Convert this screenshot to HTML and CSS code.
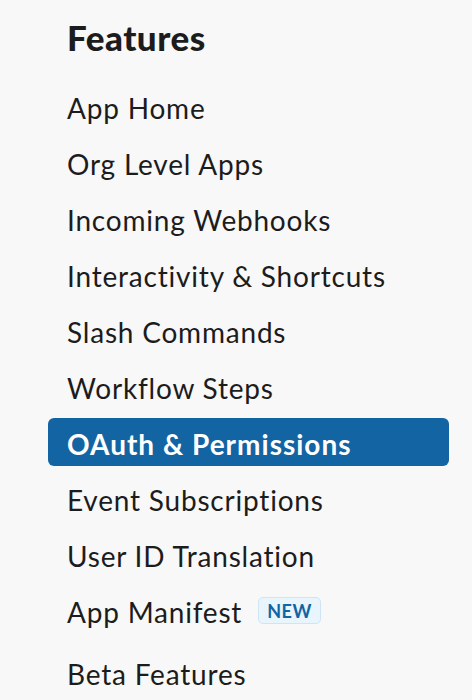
FILE: index.html
```html
<!DOCTYPE html>
<html lang="en">
<head>
<meta charset="utf-8">
<title>Features</title>
<link rel="stylesheet" href="styles.css">
</head>
<body>
<nav class="sidebar">
  <h2 class="sidebar-title">Features</h2>
  <ul class="nav-list">
    <li><a class="nav-item" href="#">App Home</a></li>
    <li><a class="nav-item" href="#">Org Level Apps</a></li>
    <li><a class="nav-item" href="#">Incoming Webhooks</a></li>
    <li><a class="nav-item" href="#">Interactivity &amp; Shortcuts</a></li>
    <li><a class="nav-item" href="#">Slash Commands</a></li>
    <li><a class="nav-item" href="#">Workflow Steps</a></li>
    <li><a class="nav-item is-active" href="#">OAuth &amp; Permissions</a></li>
    <li><a class="nav-item" href="#">Event Subscriptions</a></li>
    <li><a class="nav-item" href="#">User ID Translation</a></li>
    <li><a class="nav-item" href="#">App Manifest <span class="badge">NEW</span></a></li>
    <li class="nav-group-end"><a class="nav-item" href="#">Beta Features</a></li>
  </ul>
</nav>
</body>
</html>
```
FILE: styles.css
```css
html, body {
  margin: 0;
  padding: 0;
  background: #f8f8f8;
}

body {
  font-family: Lato, "Liberation Sans", sans-serif;
  color: #1d1c1d;
}

.sidebar {
  width: 401px;
  margin-left: 48px;
  padding-top: 17px;
}

.sidebar-title {
  margin: 0 0 25px 19px;
  font-size: 35px;
  line-height: 40px;
  font-weight: 900;
  letter-spacing: 0.5px;
  color: #1d1c1d;
}

.nav-list {
  list-style: none;
  margin: 0;
  padding: 0;
  display: flex;
  flex-direction: column;
  gap: 8px;
}

.nav-group-end {
  margin-top: 6px;
}

.nav-item {
  display: flex;
  align-items: center;
  gap: 16px;
  box-sizing: border-box;
  height: 48px;
  padding: 4px 0 0 19px;
  border-radius: 6px;
  font-size: 28px;
  line-height: 48px;
  letter-spacing: 0.8px;
  color: #1d1c1d;
  text-decoration: none;
}

.nav-item.is-active {
  background: #1264a3;
  color: #ffffff;
  font-weight: 700;
  letter-spacing: 1px;
}

.badge {
  display: inline-flex;
  align-items: center;
  justify-content: center;
  box-sizing: border-box;
  height: 27px;
  margin-top: -3px;
  padding: 0 8px;
  border: 1px solid #cfe5f6;
  border-radius: 5px;
  background: #e8f5fd;
  color: #1264a3;
  font-size: 18px;
  font-weight: 700;
  letter-spacing: 0.5px;
  line-height: 1;
}
```
